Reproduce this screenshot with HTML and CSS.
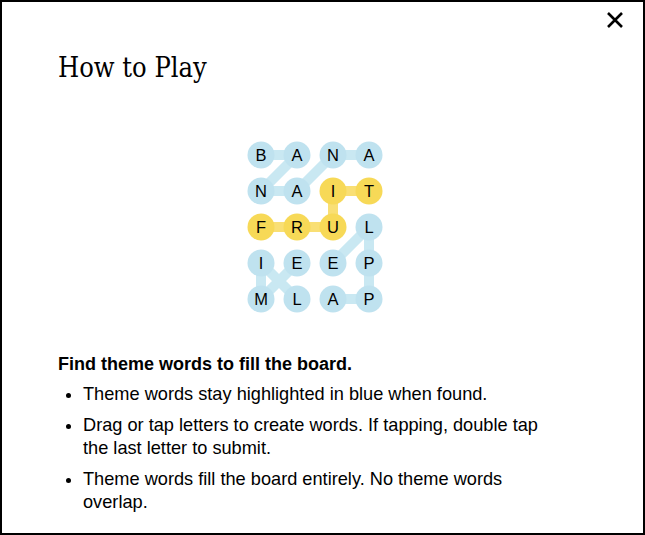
FILE: index.html
```html
<!DOCTYPE html>
<html lang="en">

<head>
  <meta charset="UTF-8">
  <meta name="viewport" content="width=device-width, initial-scale=1.0">
  <title>How to Play</title>
  <link rel="stylesheet" href="styles.css">
</head>

<body>
  <div class="modal">
    <button class="close-btn" aria-label="Close">
      <svg width="18" height="18" viewBox="0 0 18 18">
        <path d="M2 2 L16 16 M16 2 L2 16" stroke="#000" stroke-width="2.6" fill="none" />
      </svg>
    </button>

    <h1 class="modal-title">How to Play</h1>

    <div class="board">
      <svg width="136" height="172" viewBox="0 0 136 172">
        <!-- connections between letters -->
        <polyline class="link theme" points="14,14 50,14 14,50 50,50 86,14 122,14" />
        <polyline class="link spangram" points="14,86 50,86 86,86 86,50 122,50" />
        <polyline class="link theme" points="86,158 122,158 122,122 122,86 86,122" />
        <polyline class="link theme" points="50,158 14,122 14,158 50,122" />

        <!-- row 1 -->
        <circle class="dot theme" cx="14" cy="14" r="13.5" />
        <circle class="dot theme" cx="50" cy="14" r="13.5" />
        <circle class="dot theme" cx="86" cy="14" r="13.5" />
        <circle class="dot theme" cx="122" cy="14" r="13.5" />
        <!-- row 2 -->
        <circle class="dot theme" cx="14" cy="50" r="13.5" />
        <circle class="dot theme" cx="50" cy="50" r="13.5" />
        <circle class="dot spangram" cx="86" cy="50" r="13.5" />
        <circle class="dot spangram" cx="122" cy="50" r="13.5" />
        <!-- row 3 -->
        <circle class="dot spangram" cx="14" cy="86" r="13.5" />
        <circle class="dot spangram" cx="50" cy="86" r="13.5" />
        <circle class="dot spangram" cx="86" cy="86" r="13.5" />
        <circle class="dot theme" cx="122" cy="86" r="13.5" />
        <!-- row 4 -->
        <circle class="dot theme" cx="14" cy="122" r="13.5" />
        <circle class="dot theme" cx="50" cy="122" r="13.5" />
        <circle class="dot theme" cx="86" cy="122" r="13.5" />
        <circle class="dot theme" cx="122" cy="122" r="13.5" />
        <!-- row 5 -->
        <circle class="dot theme" cx="14" cy="158" r="13.5" />
        <circle class="dot theme" cx="50" cy="158" r="13.5" />
        <circle class="dot theme" cx="86" cy="158" r="13.5" />
        <circle class="dot theme" cx="122" cy="158" r="13.5" />

        <g class="letters">
          <text x="14" y="14">B</text><text x="50" y="14">A</text><text x="86" y="14">N</text><text x="122" y="14">A</text>
          <text x="14" y="50">N</text><text x="50" y="50">A</text><text x="86" y="50">I</text><text x="122" y="50">T</text>
          <text x="14" y="86">F</text><text x="50" y="86">R</text><text x="86" y="86">U</text><text x="122" y="86">L</text>
          <text x="14" y="122">I</text><text x="50" y="122">E</text><text x="86" y="122">E</text><text x="122" y="122">P</text>
          <text x="14" y="158">M</text><text x="50" y="158">L</text><text x="86" y="158">A</text><text x="122" y="158">P</text>
        </g>
      </svg>
    </div>

    <div class="rules">
      <h2>Find theme words to fill the board.</h2>
      <ul>
        <li>Theme words stay highlighted in blue when found.</li>
        <li>Drag or tap letters to create words. If tapping, double tap the last letter to submit.</li>
        <li>Theme words fill the board entirely. No theme words overlap.</li>
      </ul>
    </div>
  </div>
</body>

</html>
```

FILE: styles.css
```css
body {
  margin: 0;
  padding: 0;
  background-color: #fff;
  font-family: 'Liberation Sans', Arial, sans-serif;
  color: #000;
}

.modal {
  position: relative;
  width: 645px;
  height: 535px;
  box-sizing: border-box;
  border: 2px solid #000;
  background-color: #fff;
  padding: 49px 71px 0 56px;
}

.close-btn {
  position: absolute;
  top: 8px;
  right: 18px;
  width: 20px;
  height: 20px;
  padding: 0;
  border: none;
  background: none;
  cursor: pointer;
  display: flex;
  align-items: center;
  justify-content: center;
}

.modal-title {
  margin: 0;
  font-family: 'DejaVu Serif Condensed', 'DejaVu Serif', serif;
  font-weight: normal;
  font-size: 27px;
  line-height: 34px;
  color: #000;
}

.board {
  display: flex;
  justify-content: center;
  margin-top: 56px;
}

.board svg {
  display: block;
}

.link {
  fill: none;
  stroke-width: 10;
  stroke-linejoin: round;
  stroke-linecap: round;
}

.link.theme {
  stroke: #c9e8f2;
}

.link.spangram {
  stroke: #f9df74;
}

.dot.theme {
  fill: #bfe2ef;
}

.dot.spangram {
  fill: #f7d957;
}

.letters text {
  font-family: 'Liberation Sans', Arial, sans-serif;
  font-size: 16.5px;
  fill: #000;
  text-anchor: middle;
  dominant-baseline: central;
}

.rules {
  margin-top: 40px;
}

.rules h2 {
  margin: 0;
  font-size: 18px;
  line-height: 23px;
  font-weight: bold;
}

.rules ul {
  margin: 7px 24px 0 0;
  padding-left: 25px;
  font-size: 18.2px;
  line-height: 23px;
}

.rules li {
  margin-bottom: 8px;
}
```
